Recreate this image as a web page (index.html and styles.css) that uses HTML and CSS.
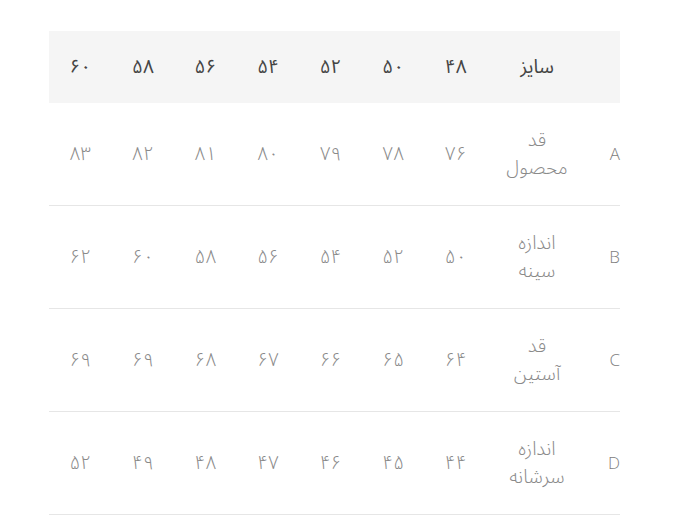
FILE: index.html
```html
<!DOCTYPE html>
<html lang="fa" dir="rtl">
<head>
<meta charset="utf-8">
<title>جدول سایز</title>
<link rel="stylesheet" href="styles.css">
</head>
<body>
<div class="page">
  <table class="size-table">
    <thead>
      <tr>
        <th class="letter"></th>
        <th class="label">سایز</th>
        <th>۴۸</th><th>۵۰</th><th>۵۲</th><th>۵۴</th><th>۵۶</th><th>۵۸</th><th>۶۰</th>
      </tr>
    </thead>
    <tbody>
      <tr>
        <td class="letter">A</td>
        <td class="label"><span class="label-text">قد محصول</span></td>
        <td>۷۶</td><td>۷۸</td><td>۷۹</td><td>۸۰</td><td>۸۱</td><td>۸۲</td><td>۸۳</td>
      </tr>
      <tr>
        <td class="letter">B</td>
        <td class="label"><span class="label-text">اندازه سینه</span></td>
        <td>۵۰</td><td>۵۲</td><td>۵۴</td><td>۵۶</td><td>۵۸</td><td>۶۰</td><td>۶۲</td>
      </tr>
      <tr>
        <td class="letter">C</td>
        <td class="label"><span class="label-text">قد آستین</span></td>
        <td>۶۴</td><td>۶۵</td><td>۶۶</td><td>۶۷</td><td>۶۸</td><td>۶۹</td><td>۶۹</td>
      </tr>
      <tr>
        <td class="letter">D</td>
        <td class="label"><span class="label-text">اندازه سرشانه</span></td>
        <td>۴۴</td><td>۴۵</td><td>۴۶</td><td>۴۷</td><td>۴۸</td><td>۴۹</td><td>۵۲</td>
      </tr>
    </tbody>
  </table>
</div>
</body>
</html>
```
FILE: styles.css
```css
html, body {
  margin: 0;
  padding: 0;
  background: #ffffff;
}

body {
  font-family: "Noto Sans Arabic", "DejaVu Sans", "Noto Sans", sans-serif;
  color: #777777;
}

.page {
  padding: 31px 60px 0 49px;
}

.size-table {
  width: 571px;
  border-collapse: collapse;
  table-layout: fixed;
}

.size-table th,
.size-table td {
  text-align: center;
  vertical-align: middle;
  padding: 0;
  width: 62.57px;
}

.size-table thead tr {
  background: #f5f5f5;
}

.size-table th {
  height: 72px;
  font-size: 19px;
  font-weight: 400;
  color: #444444;
}

.size-table td {
  font-size: 19px;
  font-weight: 300;
  line-height: 28px;
  padding: 23px 0;
  height: 56px;
  color: #8a8a8a;
}

.size-table tbody tr {
  border-bottom: 1px solid #e6e6e6;
}

.size-table .letter {
  width: 33px;
  text-align: right;
  font-family: "Open Sans", "Noto Sans", sans-serif;
  font-weight: 300;
  font-size: 17px;
  color: #808080;
}

.size-table .label {
  width: 100px;
}

.label-text {
  display: inline-block;
  width: min-content;
}
```
